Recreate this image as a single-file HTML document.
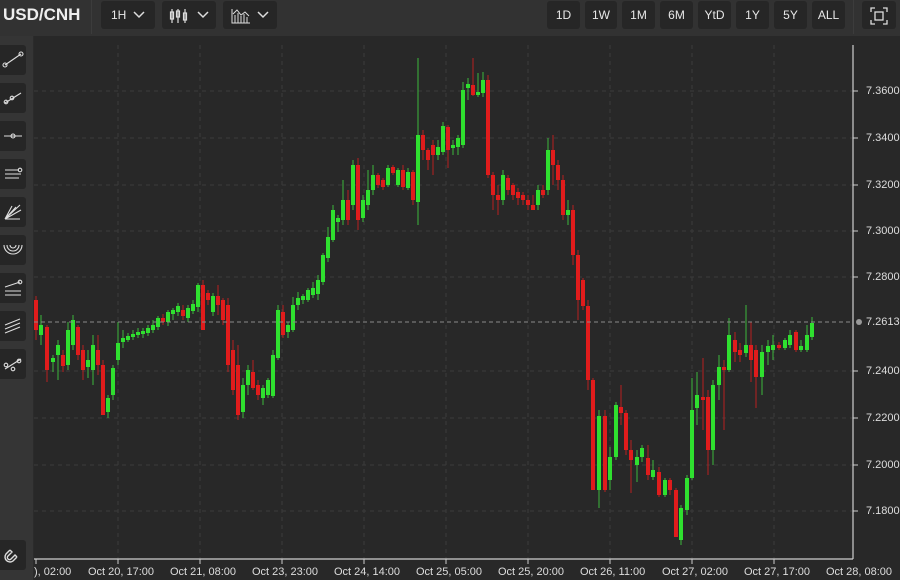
<!DOCTYPE html>
<html><head><meta charset="utf-8"><style>
*{margin:0;padding:0;box-sizing:border-box}
body{width:900px;height:580px;background:#2b2b2b;overflow:hidden;font-family:"Liberation Sans",sans-serif;position:relative;color:#e8e8e8}
.top{position:absolute;left:0;top:0;width:900px;height:36px;background:#323232}
.btn{position:absolute;top:1px;height:28px;background:#262626;border-radius:3px;color:#e8e8e8;font-size:12px;text-align:center;line-height:28px}
.side{position:absolute;left:0;top:36px;width:33px;height:544px;background:#353535}
.sb{position:absolute;left:0;width:26px;height:30px;background:#262626;border-radius:0 3px 3px 0}
.chart{position:absolute;left:34px;top:36px;width:866px;height:544px;background:#282828}
.yl{position:absolute;left:866px;font-size:11px;color:#ddd}
.xl{position:absolute;top:566px;font-size:11px;color:#ddd;white-space:nowrap}
</style></head><body>
<div class="top"></div>
<div style="position:absolute;left:3px;top:5px;font-size:17px;font-weight:bold;color:#eee">USD/CNH</div>
<div style="position:absolute;left:91px;top:0;width:1px;height:34px;background:#3c3c3c"></div>
<div class="btn" style="left:101px;width:54px">1H&nbsp;&nbsp;<svg width="12" height="8" viewBox="0 0 12 8"><path d="M1 1l5 5 5-5" stroke="#ddd" stroke-width="1.5" fill="none"/></svg></div>
<div class="btn" style="left:162px;width:54px"><svg width="22" height="16" viewBox="0 0 22 16" style="vertical-align:middle"><g stroke="#ddd" fill="none" stroke-width="1.2"><path d="M3 1v14M9 1v14M16 1v14"/><rect x="1.5" y="4" width="3" height="7"/><rect x="7.5" y="3" width="3" height="6"/><rect x="14.5" y="5" width="3" height="7"/></g></svg>&nbsp;&nbsp;<svg width="12" height="8" viewBox="0 0 12 8"><path d="M1 1l5 5 5-5" stroke="#ddd" stroke-width="1.5" fill="none"/></svg></div>
<div class="btn" style="left:223px;width:54px"><svg width="20" height="16" viewBox="0 0 20 16" style="vertical-align:middle"><g stroke="#ddd" fill="none" stroke-width="1"><path d="M1 1v14h18M4 15V7M7 15V5M10 15V8M13 15V6M16 15V9M2 6l4-4 4 5 4-3 4 4"/></g></svg>&nbsp;&nbsp;<svg width="12" height="8" viewBox="0 0 12 8"><path d="M1 1l5 5 5-5" stroke="#ddd" stroke-width="1.5" fill="none"/></svg></div>
<div class="btn" style="left:547px;width:33px">1D</div>
<div class="btn" style="left:585px;width:32px">1W</div>
<div class="btn" style="left:622px;width:33px">1M</div>
<div class="btn" style="left:660px;width:33px">6M</div>
<div class="btn" style="left:698px;width:33px">YtD</div>
<div class="btn" style="left:736px;width:33px">1Y</div>
<div class="btn" style="left:774px;width:33px">5Y</div>
<div class="btn" style="left:812px;width:33px">ALL</div>
<div style="position:absolute;left:853px;top:0;width:1px;height:34px;background:#3c3c3c"></div>
<div class="btn" style="left:862px;width:34px"><svg width="18" height="18" viewBox="0 0 18 18" style="vertical-align:middle"><g stroke="#ddd" fill="none" stroke-width="1.3"><path d="M1 5V1h4M13 1h4v4M17 13v4h-4M5 17H1v-4"/><rect x="5" y="5" width="8" height="8"/></g></svg></div>
<div class="side"></div>
<div id="sbs"></div>
<div class="chart"></div>
<svg id="c" width="900" height="580" style="position:absolute;left:0;top:0"></svg>
<div class="yl" style="top:85px">7.3600</div>
<div class="yl" style="top:132px">7.3400</div>
<div class="yl" style="top:179px">7.3200</div>
<div class="yl" style="top:225px">7.3000</div>
<div class="yl" style="top:271px">7.2800</div>
<div class="yl" style="top:316px;background:#282828">7.2613</div>
<div class="yl" style="top:365px">7.2400</div>
<div class="yl" style="top:412px">7.2200</div>
<div class="yl" style="top:459px">7.2000</div>
<div class="yl" style="top:505px">7.1800</div>
<div class="xl" style="left:34px">), 02:00</div>
<div class="xl" style="left:88px">Oct 20, 17:00</div>
<div class="xl" style="left:170px">Oct 21, 08:00</div>
<div class="xl" style="left:252px">Oct 23, 23:00</div>
<div class="xl" style="left:334px">Oct 24, 14:00</div>
<div class="xl" style="left:416px">Oct 25, 05:00</div>
<div class="xl" style="left:498px">Oct 25, 20:00</div>
<div class="xl" style="left:580px">Oct 26, 11:00</div>
<div class="xl" style="left:662px">Oct 27, 02:00</div>
<div class="xl" style="left:744px">Oct 27, 17:00</div>
<div class="xl" style="left:826px">Oct 28, 08:00</div>
<script>
var s='';
var gx=[118,200,282,364,446,528,610,692,774];
gx.forEach(function(x){s+='<line x1="'+x+'" y1="45" x2="'+x+'" y2="559" stroke="#3b3b3b" stroke-dasharray="4,4"/>';});
[91,138,185,231,277,371,418,465,511].forEach(function(y){s+='<line x1="34" y1="'+y+'" x2="853" y2="'+y+'" stroke="#3b3b3b" stroke-dasharray="4,4"/><line x1="853" y1="'+y+'" x2="858" y2="'+y+'" stroke="#ccc"/>';});
s+='<line x1="853" y1="45" x2="853" y2="559" stroke="#cfcfcf" stroke-width="1.2"/>';
s+='<line x1="34" y1="559" x2="853" y2="559" stroke="#cfcfcf" stroke-width="1.2"/>';
[36].concat(gx).forEach(function(x){s+='<line x1="'+x+'" y1="559" x2="'+x+'" y2="564" stroke="#ccc"/>';});
var d=[[36,300,330,296,340],[41,335,325,315,345],[47,327,370,325,382],[53,362,358,355,372],[58,355,345,340,380],[63,355,366,350,372],[68,365,330,322,370],[73,345,320,315,350],[78,327,355,325,360],[83,350,370,345,380],[88,367,360,350,378],[93,370,345,335,385],[98,350,365,335,375],[103,365,415,360,415],[108,412,398,395,418],[113,395,368,365,400],[118,360,343,322,365],[123,342,338,330,348],[128,340,336,333,342],[133,337,334,330,340],[138,335,332,328,338],[143,334,331,328,338],[148,333,328,325,336],[153,330,325,320,333],[158,327,318,316,330],[163,318,322,314,325],[168,322,312,310,326],[173,314,310,308,320],[178,312,306,303,316],[183,310,316,305,320],[188,318,308,305,322],[193,311,304,300,314],[198,307,285,283,312],[203,285,330,280,330],[208,293,300,290,305],[213,312,296,293,316],[218,296,305,285,315],[223,300,320,298,325],[228,305,365,298,372],[233,350,390,340,395],[238,365,415,345,420],[243,412,385,378,418],[248,385,370,365,395],[253,372,388,360,390],[258,385,395,380,400],[263,398,388,385,405],[268,395,380,378,398],[273,396,355,350,398],[278,358,310,305,360],[283,312,335,305,338],[288,332,325,322,338],[293,330,305,297,332],[298,305,298,292,310],[303,300,296,294,304],[308,300,290,288,302],[313,295,288,282,298],[318,294,280,275,300],[323,282,255,253,285],[328,258,237,227,262],[333,240,210,205,242],[338,222,218,215,232],[343,220,200,180,225],[348,200,220,190,225],[353,205,165,160,210],[358,165,220,158,230],[363,218,200,195,222],[368,205,190,170,210],[373,190,175,165,195],[378,175,185,173,188],[383,180,187,178,190],[388,185,168,165,187],[393,167,173,165,175],[398,185,170,168,187],[403,170,187,165,190],[408,188,172,168,190],[413,172,200,170,205],[418,202,135,58,225],[423,135,150,130,160],[428,150,160,148,170],[433,145,155,140,175],[438,155,147,140,160],[443,152,126,122,155],[448,127,150,125,168],[453,148,145,140,155],[458,147,138,135,155],[463,145,90,82,148],[468,88,84,78,100],[473,85,95,58,96],[478,95,92,73,97],[483,93,80,72,97],[488,80,175,75,178],[493,175,195,172,210],[498,195,200,185,215],[503,200,175,170,205],[508,178,190,175,195],[513,185,195,183,200],[518,192,198,188,205],[523,195,200,192,205],[528,200,205,195,210],[533,205,210,195,210],[538,205,190,185,210],[543,190,195,185,198],[548,190,150,138,195],[553,150,165,135,185],[558,165,180,160,190],[563,180,215,175,220],[568,215,210,200,225],[573,210,255,205,265],[578,255,300,250,320],[583,280,306,278,310],[588,306,380,300,390],[593,380,490,378,490],[599,490,416,410,508],[605,416,490,410,492],[610,480,457,447,490],[616,457,405,402,460],[621,407,413,385,425],[626,413,450,410,455],[631,450,460,440,493],[637,465,457,450,482],[642,457,448,445,462],[648,458,475,445,480],[653,477,470,460,480],[659,472,495,467,497],[665,495,480,478,497],[670,480,490,478,495],[676,490,537,488,537],[681,540,508,505,545],[687,510,478,475,515],[692,478,410,378,480],[697,408,395,372,425],[703,397,400,358,430],[708,397,450,390,475],[713,450,385,380,465],[719,385,367,355,400],[724,367,370,360,430],[729,370,335,318,372],[735,340,352,332,362],[740,350,355,343,362],[746,353,345,305,357],[751,345,360,322,382],[756,350,377,345,408],[762,377,352,345,395],[768,352,346,340,365],[773,350,345,335,360],[779,345,348,342,350],[785,348,340,338,350],[790,345,335,330,348],[796,332,350,330,352],[801,350,346,340,352],[807,350,335,325,352],[812,337,323,317,340]];
d.forEach(function(c){var g=c[2]<c[1];var col=g?'#2fe02f':'#e01c1c';var t=Math.min(c[1],c[2]),h=Math.max(2,Math.abs(c[2]-c[1]));
s+='<line x1="'+c[0]+'" y1="'+c[3]+'" x2="'+c[0]+'" y2="'+c[4]+'" stroke="'+(g?'#3cb83c':'#b82020')+'" stroke-width="1"/>';
s+='<rect x="'+(c[0]-2)+'" y="'+t+'" width="4" height="'+h+'" fill="'+col+'"/>';});
s+='<line x1="34" y1="322" x2="853" y2="322" stroke="#8a8a8a" stroke-dasharray="4,3"/><circle cx="859" cy="322" r="3" fill="#999"/>';
document.getElementById('c').innerHTML=s;
var ic=['<path d="M5 20L21 9"/><circle cx="5" cy="20" r="2"/><circle cx="21" cy="9" r="2"/>','<path d="M5 20L21 10"/><circle cx="6" cy="19" r="1.8"/><circle cx="12" cy="15" r="1.8"/>','<path d="M4 15h18"/><circle cx="13" cy="15" r="2"/>','<path d="M5 11h14M5 15h16M5 19h14"/><circle cx="20" cy="11" r="1.8"/>','<path d="M5 22L20 8M5 22L16 10M5 22L21 13M5 22L12 9M5 22h15"/>','<path d="M4 10a9 9 0 0 0 18 0M7 10a6 6 0 0 0 12 0M10 10a3 3 0 0 0 6 0"/>','<path d="M5 14L20 9M5 18h16M5 22h16"/><circle cx="20" cy="9" r="1.8"/>','<path d="M5 14L20 8M5 18L20 12M5 22L20 16"/>','<path d="M5 20L21 10"/><circle cx="6" cy="16" r="1.8"/><circle cx="13" cy="20" r="1.8"/><circle cx="19" cy="12" r="1.8"/>'];
var h='';ic.forEach(function(p,i){var y=45+i*38;h+='<div class="sb" style="top:'+y+'px"><svg width="26" height="30" viewBox="0 0 26 30"><g stroke="#ddd" fill="none" stroke-width="1.1">'+p+'</g></svg></div>';});
h+='<div class="sb" style="top:540px"><svg width="26" height="30" viewBox="0 0 26 30"><g stroke="#ddd" fill="none" stroke-width="1.4"><path d="M10 10l-4 4a5 5 0 0 0 7 7l4-4M10 10l2 2-4 4a2 2 0 0 0 3 3l4-4 2 2"/></g></svg></div>';
document.getElementById('sbs').innerHTML=h;
</script>
</body></html>
